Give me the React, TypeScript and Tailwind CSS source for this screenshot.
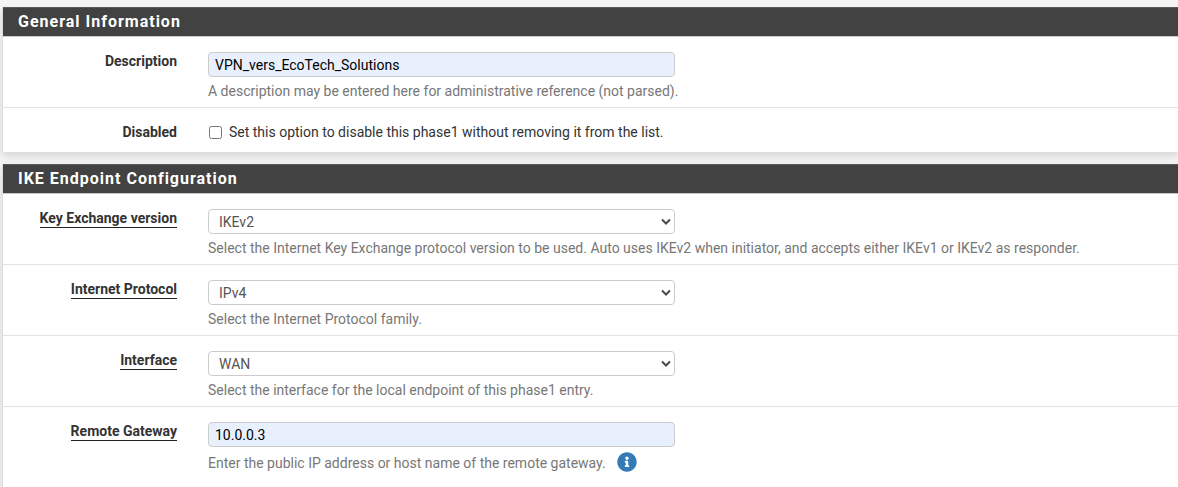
import { useId, useState, type ReactNode } from 'react';

function Panel({ title, children }: { title: string; children: ReactNode }) {
  return (
    <section className="border-l border-[#dddddd] bg-white shadow-[0_4px_8px_rgba(0,0,0,0.12)]">
      <h2 className="h-[30px] border-t border-b border-t-[#5a5a5a] border-b-[#c8c8c8] bg-[#424242] pl-[15px] text-base leading-7 font-bold tracking-[1px] text-white">
        {title}
      </h2>
      <div className="divide-y divide-[#e3e3e3]">{children}</div>
    </section>
  );
}

type RowProps = {
  label: string;
  htmlFor: string;
  required?: boolean;
  children: ReactNode;
};

function Row({ label, htmlFor, required = false, children }: RowProps) {
  return (
    <div className="flex gap-[31px] pt-[15px] pb-[7px] last:pb-[11px]">
      <div className="w-[174px] shrink-0 text-right leading-[18px] font-bold text-[#333333]">
        <label
          htmlFor={htmlFor}
          className={required ? 'inline-block border-b border-[#212121]' : 'inline-block'}
        >
          {label}
        </label>
      </div>
      <div className="min-w-0 flex-1">{children}</div>
    </div>
  );
}

function Help({ children }: { children: ReactNode }) {
  return <p className="mt-[5px] flex items-end leading-[18px] text-[#777777]">{children}</p>;
}

type TextRowProps = { label: string; initial: string; required?: boolean; help: ReactNode };

function TextRow({ label, initial, required, help }: TextRowProps) {
  const id = useId();
  const [value, setValue] = useState(initial);
  return (
    <Row label={label} htmlFor={id} required={required}>
      <input
        id={id}
        type="text"
        value={value}
        onChange={(e) => setValue(e.target.value)}
        className="block h-[25px] w-full max-w-[467px] rounded border border-[#cccccc] bg-[#e8f0fe] px-[6px] text-black"
      />
      <Help>{help}</Help>
    </Row>
  );
}

type SelectRowProps = { label: string; options: string[]; initial: string; help: string };

function SelectRow({ label, options, initial, help }: SelectRowProps) {
  const id = useId();
  return (
    <Row label={label} htmlFor={id} required>
      <div className="relative max-w-[467px]">
        <select
          id={id}
          defaultValue={initial}
          className="block h-[25px] w-full appearance-none rounded border border-[#cccccc] bg-white px-[10px] text-[#555555]"
        >
          {options.map((option) => (
            <option key={option}>{option}</option>
          ))}
        </select>
        <svg
          viewBox="0 0 10 7"
          className="pointer-events-none absolute top-[9px] right-1 h-[7px] w-[10px]"
          fill="none"
          stroke="#4a4a4a"
          strokeWidth="2"
          aria-hidden="true"
        >
          <path d="M1 1.500l4 4 4-4" />
        </svg>
      </div>
      <Help>{help}</Help>
    </Row>
  );
}

function InfoIcon() {
  return (
    <svg viewBox="0 0 512 512" className="size-5" fill="#337ab7" aria-hidden="true">
      <path d="M256 8C119 8 8 119 8 256s111 248 248 248 248-111 248-248S393 8 256 8zm0 110c23.200 0 42 18.800 42 42s-18.800 42-42 42-42-18.800-42-42 18.800-42 42-42zm56 254c0 6.600-5.400 12-12 12h-88c-6.600 0-12-5.400-12-12v-24c0-6.600 5.400-12 12-12h12v-64h-12c-6.600 0-12-5.400-12-12v-24c0-6.600 5.400-12 12-12h64c6.600 0 12 5.400 12 12v100h12c6.600 0 12 5.400 12 12v24z" />
    </svg>
  );
}

export default function App() {
  return (
    <main className="flex min-h-screen flex-col gap-3 overflow-hidden bg-[#f4f4f4] pt-[7px] pl-[2px] font-[Roboto,sans-serif] text-sm">
      <Panel title="General Information">
        <TextRow
          label="Description"
          initial="VPN_vers_EcoTech_Solutions"
          help="A description may be entered here for administrative reference (not parsed)."
        />
        <Row label="Disabled" htmlFor="disabled">
          <label className="flex items-center gap-[7px] leading-[18px] text-[#333333]">
            <input id="disabled" type="checkbox" className="ml-px size-[13px]" />
            Set this option to disable this phase1 without removing it from the list.
          </label>
        </Row>
      </Panel>
      <div className="flex grow flex-col *:grow">
        <Panel title="IKE Endpoint Configuration">
          <SelectRow
            label="Key Exchange version"
            options={['IKEv1', 'IKEv2', 'Auto']}
            initial="IKEv2"
            help="Select the Internet Key Exchange protocol version to be used. Auto uses IKEv2 when initiator, and accepts either IKEv1 or IKEv2 as responder."
          />
          <SelectRow
            label="Internet Protocol"
            options={['IPv4', 'IPv6']}
            initial="IPv4"
            help="Select the Internet Protocol family."
          />
          <SelectRow
            label="Interface"
            options={['WAN', 'LAN']}
            initial="WAN"
            help="Select the interface for the local endpoint of this phase1 entry."
          />
          <TextRow
            label="Remote Gateway"
            initial="10.0.0.3"
            required
            help={
              <>
                Enter the public IP address or host name of the remote gateway.
                <button type="button" aria-label="More information" className="ml-[11px]">
                  <InfoIcon />
                </button>
              </>
            }
          />
        </Panel>
      </div>
    </main>
  );
}
